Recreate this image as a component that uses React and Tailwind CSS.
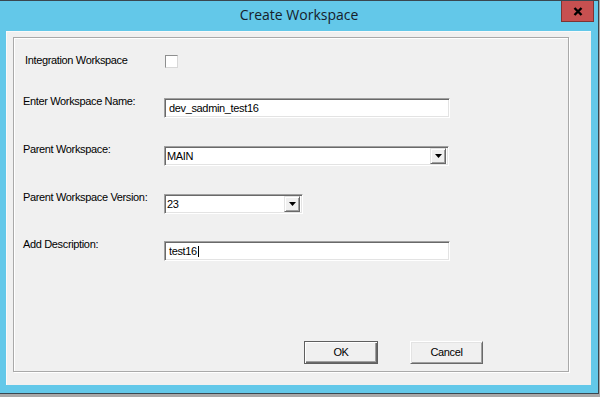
import React from "react"

const sunken =
  "border border-t-[#a0a0a0] border-l-[#a0a0a0] border-b-[#ffffff] border-r-[#ffffff] shadow-[inset_1px_1px_0_#696969,inset_-1px_-1px_0_#e3e3e3] bg-white"

function TextBox({ value, width, cursor }) {
  return (
    <div className={`${sunken} h-[20px] flex items-center pl-[4px] ${width}`}>
      <span className="leading-[13px]">{value}</span>
      {cursor && <span className="w-px h-[11px] bg-black ml-[1px]" />}
    </div>
  )
}

function Select({ value, width }) {
  return (
    <div className={`${sunken} h-[20px] flex items-center pl-[2px] pr-[2px] ${width}`}>
      <span className="flex-1 leading-[13px]">{value}</span>
      <div className="w-[16px] h-[16px] bg-[#f0f0f0] border border-t-[#e3e3e3] border-l-[#e3e3e3] border-b-[#696969] border-r-[#696969] shadow-[inset_1px_1px_0_#fff,inset_-1px_-1px_0_#a0a0a0] flex items-center justify-center">
        <svg width="7" height="4" viewBox="0 0 7 4">
          <path d="M0 0 H7 L3.5 4 Z" fill="#000" />
        </svg>
      </div>
    </div>
  )
}

function Row({ label, children, className = "", labelClass = "" }) {
  return (
    <div className={`flex items-start ${className}`}>
      <div className={`w-[141px] shrink-0 leading-[13px] ${labelClass}`}>{label}</div>
      <div className="mt-[3px]">{children}</div>
    </div>
  )
}

export default function App() {
  return (
    <div className="w-[600px] h-[397px] bg-[#a8a8a8] overflow-hidden font-['Liberation_Sans',Arial,sans-serif] text-[11px] tracking-[-0.35px] text-black">
      <div className="w-[599px] h-[394px] bg-[#63c8e9] border-t border-r border-b border-[#3a4750] flex flex-col">
        {/* title bar */}
        <div className="h-[30px] grid grid-cols-[1fr_auto_1fr] items-start shrink-0">
          <div />
          <div className="pt-[4px] font-['Open_Sans',sans-serif] text-[14px] leading-[20px] tracking-normal text-[#16202a]">
            Create Workspace
          </div>
          <div className="flex justify-end pr-[4px]">
            <div className="w-[33px] h-[21px] bg-[#c75050] border border-[#7d3434] border-t-0 flex items-center justify-center">
              <svg width="10" height="9" viewBox="0 0 10 9">
                <path d="M1.5 1 L8.5 8 M8.5 1 L1.5 8" stroke="#000" strokeWidth="2.4" />
              </svg>
            </div>
          </div>
        </div>

        {/* client area */}
        <div className="flex-1 pl-[6px] pr-[7px] pb-[8px] flex">
          <div className="flex-1 bg-[#f0f0f0] border-l border-t border-[#fafafa] pt-[5px] pl-[6px] pr-[22px] pb-[13px] flex">
            <div className="flex-1 border border-[#a9a9a9] shadow-[inset_1px_1px_0_#fff,1px_1px_0_#fff] pt-[16px] pl-[9px] flex flex-col">
              <div className="flex items-start">
                <div className="w-[139px] ml-[2px] shrink-0 leading-[13px]">Integration Workspace</div>
                <div className="mt-[1px] ml-[1px] w-[13px] h-[13px] bg-white border border-t-[#8e8f8f] border-l-[#8e8f8f] border-b-[#d8d8d8] border-r-[#d8d8d8]" />
              </div>

              <Row label="Enter Workspace Name:" className="mt-[27px]">
                <TextBox value="dev_sadmin_test16" width="w-[286px]" />
              </Row>

              <Row label="Parent Workspace:" className="mt-[25px]">
                <Select value="MAIN" width="w-[285px]" />
              </Row>

              <Row label="Parent Workspace Version:" className="mt-[25px]">
                <Select value="23" width="w-[139px]" />
              </Row>

              <Row label="Add Description:" className="mt-[24px]">
                <TextBox value="test16" width="w-[286px]" cursor />
              </Row>

              <div className="mt-auto pb-[7px] pr-[85px] flex justify-end gap-[32px]">
                <button className="w-[74px] h-[23px] bg-[#f0f0f0] border border-[#5f5f5f] shadow-[inset_1px_1px_0_#fff,inset_-1px_-1px_0_#696969,inset_-2px_-2px_0_#a0a0a0] leading-[13px]">
                  OK
                </button>
                <button className="w-[73px] h-[23px] bg-[#f0f0f0] border border-t-[#fff] border-l-[#fff] border-b-[#696969] border-r-[#696969] shadow-[inset_1px_1px_0_#e3e3e3,inset_-1px_-1px_0_#a0a0a0] leading-[13px]">
                  Cancel
                </button>
              </div>
            </div>
          </div>
        </div>
      </div>
    </div>
  )
}
